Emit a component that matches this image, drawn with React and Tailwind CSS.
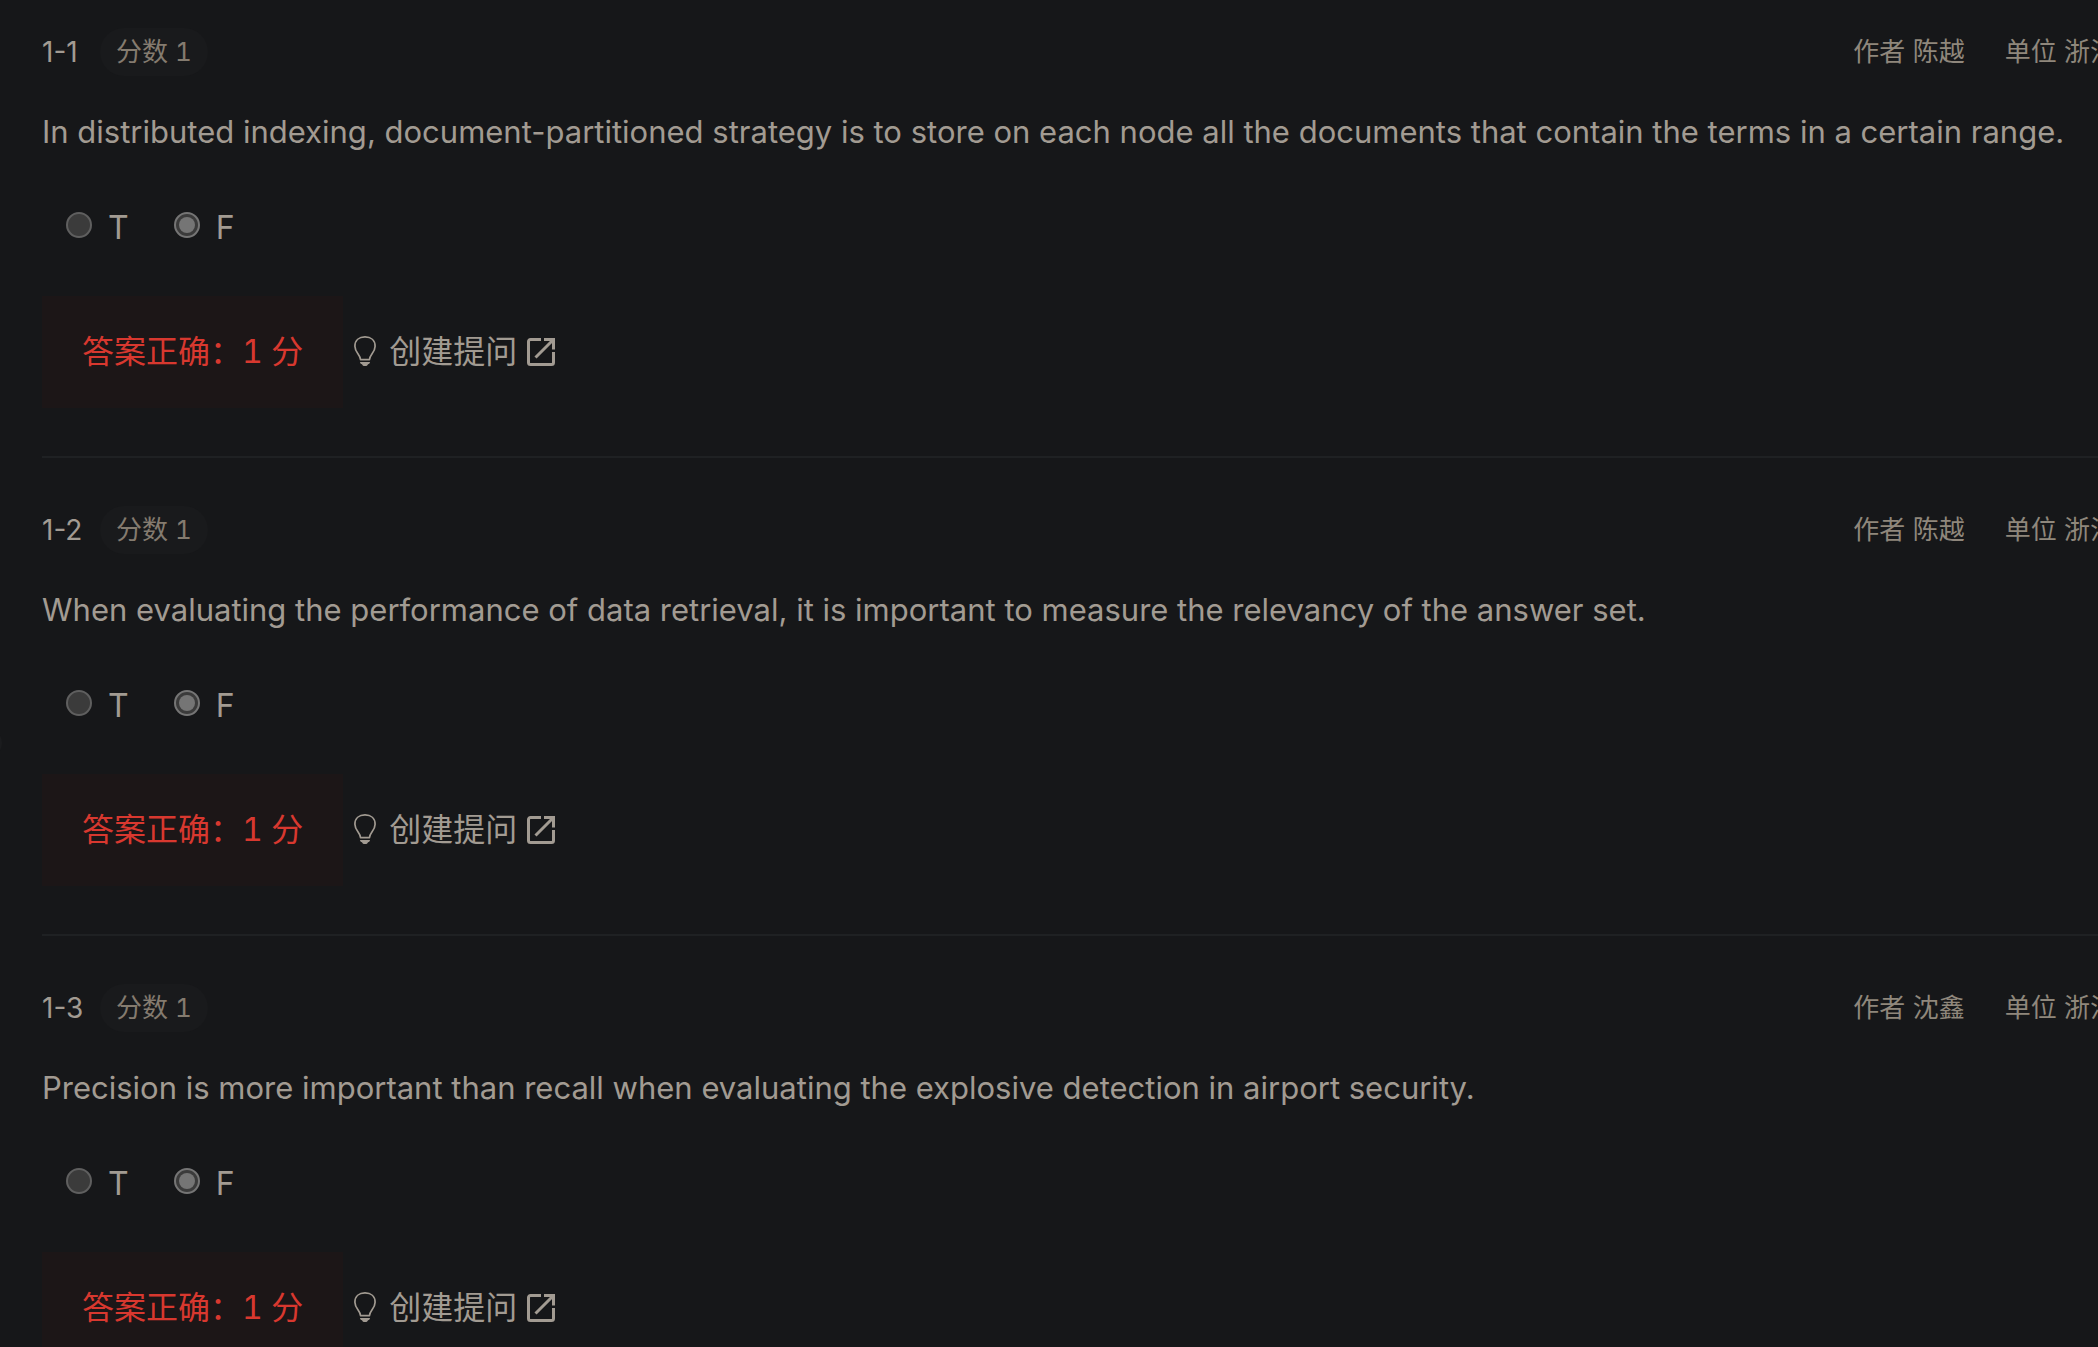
const questions = [
  {
    id: "1-1",
    author: "陈越",
    text: "In distributed indexing, document-partitioned strategy is to store on each node all the documents that contain the terms in a certain range.",
  },
  {
    id: "1-2",
    author: "陈越",
    text: "When evaluating the performance of data retrieval, it is important to measure the relevancy of the answer set.",
  },
  {
    id: "1-3",
    author: "沈鑫",
    text: "Precision is more important than recall when evaluating the explosive detection in airport security.",
  },
];

function BulbIcon() {
  return (
    <svg className="h-8 w-[26px] shrink-0" viewBox="0 0 26 32" fill="none" aria-hidden="true">
      <path
        d="M7.5 23.6C7.5 18.5 1.9 16.5 1.9 10.2C1.9 4.2 6.2 .9 12 .9S22.1 4.2 22.1 10.2C22.1 16.5 16.5 18.5 16.5 23.6Z"
        stroke="currentColor"
        strokeWidth="1.7"
        strokeLinejoin="round"
      />
      <path d="M7 26H17C17 27.3 16.2 28 15 28.2C14.6 29.5 13.6 30 12 30S9.4 29.5 9 28.2C7.8 28 7 27.3 7 26Z" fill="currentColor" />
    </svg>
  );
}

function ExternalIcon() {
  return (
    <svg className="size-7 shrink-0" viewBox="0 0 28 28" fill="none" stroke="currentColor" strokeWidth="3" aria-hidden="true">
      <path d="M14 1.5H3.5A2 2 0 0 0 1.5 3.5V24.5A2 2 0 0 0 3.5 26.5H24.5A2 2 0 0 0 26.5 24.5V14" />
      <path d="M17 1.5H26.5V11.5M26 2L8.5 19.5" />
    </svg>
  );
}

function Choice({ name, label, checked }) {
  return (
    <label className="flex items-center gap-4">
      <input
        type="radio"
        name={name}
        defaultChecked={checked}
        className="mb-1.5 grid size-[26px] appearance-none place-items-center rounded-full border-2 border-[#5f5f5f] bg-[#3b3b3b] before:size-4 before:rounded-full checked:border-[#757575] checked:before:bg-[#757575]"
      />
      <span className="text-[32px] leading-10">{label}</span>
    </label>
  );
}

function Question({ id, author, text }) {
  return (
    <article className="border-b-2 border-[#1f2123] pb-12">
      <header className="flex h-12 items-center justify-between text-[26px] leading-8">
        <div className="flex items-center gap-4">
          <h2 className="min-w-[42px] text-[28px]">{id}</h2>
          <span className="rounded-3xl bg-[#191a1c] px-4 py-2 text-[#847b6f] tabular-nums">分数 1</span>
        </div>
        <div className="flex gap-10 text-[#8f877c]">
          <span>作者 {author}</span>
          <span>单位 浙江大学</span>
        </div>
      </header>
      <p className="mt-8 text-[31px] leading-[48px] whitespace-nowrap">{text}</p>
      <fieldset aria-label={id} className="mt-11 flex h-14 items-center gap-[45px] px-6">
        <Choice name={id} label="T" />
        <Choice name={id} label="F" checked />
      </fieldset>
      <div className="mt-10 flex items-center gap-2.5 text-[32px] leading-8">
        <p className="bg-[#1c1617] p-10 text-[#d8382f] tabular-nums">答案正确：1 分</p>
        <a href="#create" className="flex items-center gap-2.5">
          <BulbIcon />
          <span>创建提问</span>
          <ExternalIcon />
        </a>
      </div>
    </article>
  );
}

export default function App() {
  return (
    <main className="relative h-screen overflow-hidden bg-[#161719] font-['Inter','Noto_Sans_CJK_SC',sans-serif] text-[#a29b92]">
      <div className="absolute top-[729px] -left-[26px] size-7 rounded-full bg-[#1b1c1e]" />
      <div className="-mr-[70px] ml-[42px] flex flex-col gap-12 pt-7">
        {questions.map((q) => (
          <Question key={q.id} {...q} />
        ))}
      </div>
    </main>
  );
}
